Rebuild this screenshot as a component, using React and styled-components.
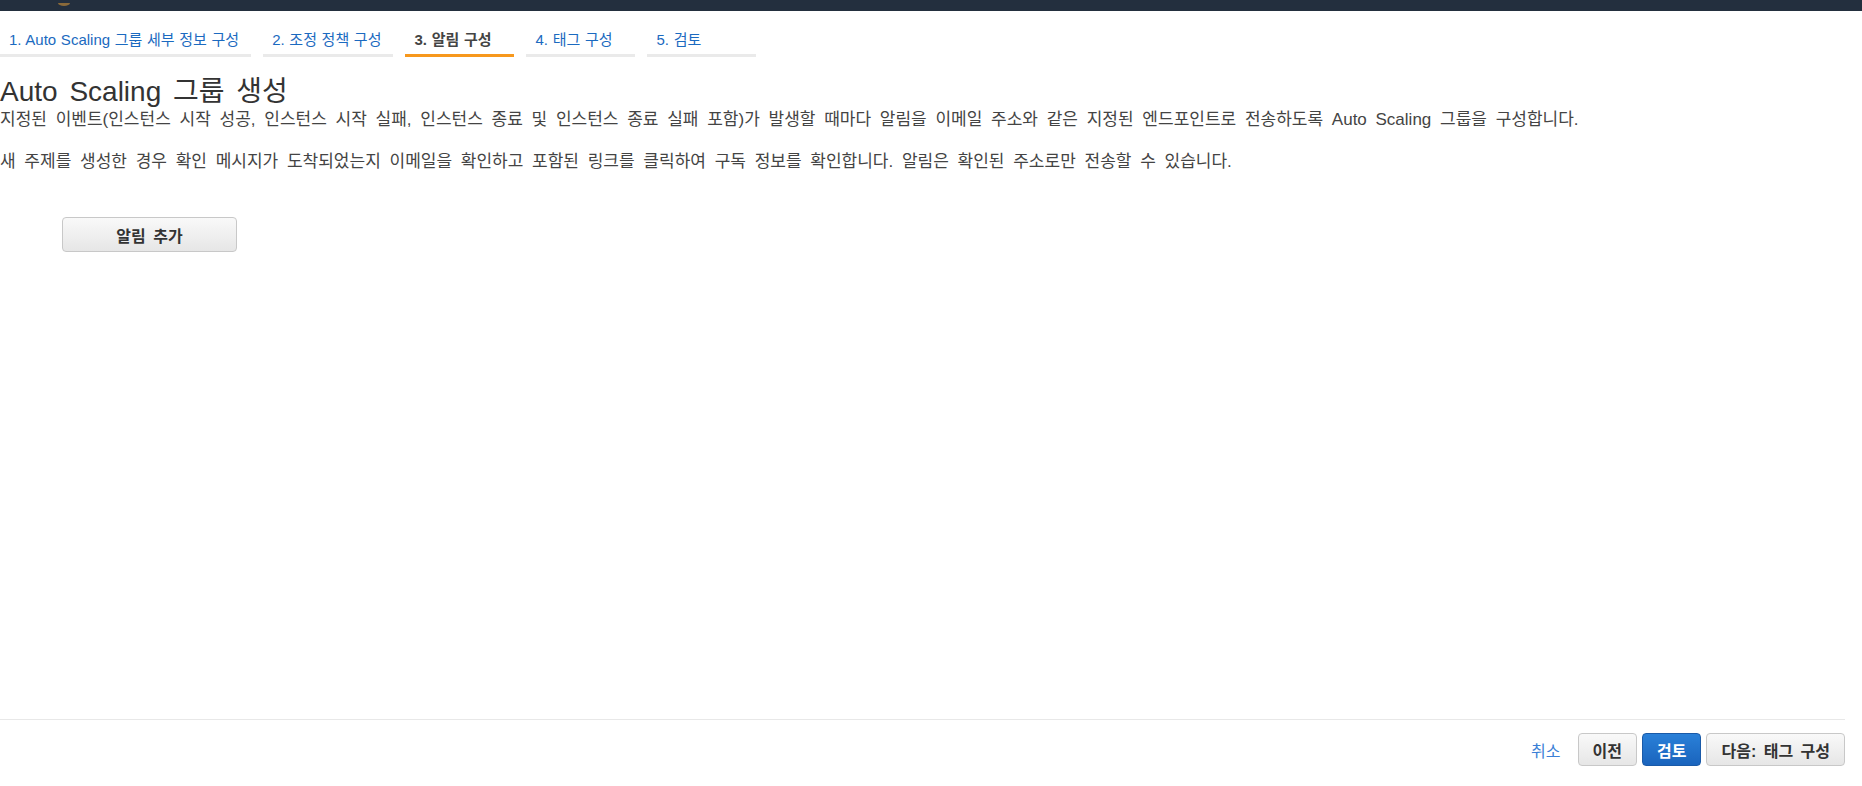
import React from 'react'
import styled, { createGlobalStyle } from 'styled-components'

const GlobalStyle = createGlobalStyle`
  html, body {
    margin: 0;
    padding: 0;
    background: #fff;
  }
  body {
    font-family: "Liberation Sans", "Noto Sans CJK KR", sans-serif;
    color: #444;
  }
`

const Page = styled.div`
  min-height: 100vh;
  display: flex;
  flex-direction: column;
`

const TopBar = styled.div`
  height: 11px;
  background: #232f3e;
  overflow: hidden;
  padding-left: 56px;
`

const Steps = styled.div`
  display: flex;
  gap: 12px;
  margin-top: 20px;
`

const Step = styled.div`
  min-width: 88px;
  padding: 0 12px 5px 9px;
  font-size: 15px;
  line-height: 18px;
  word-spacing: 0.5px;
  color: ${p => (p.$active ? '#444' : '#1b6ac0')};
  font-weight: ${p => (p.$active ? 'bold' : 'normal')};
  border-bottom: 3px solid ${p => (p.$active ? '#f7981d' : '#eaeaea')};
  white-space: nowrap;
`

const Content = styled.div`
  flex: 1;
`

const Title = styled.h1`
  margin: 19px 0 0;
  font-size: 28px;
  line-height: 32px;
  font-weight: normal;
  word-spacing: 4px;
  color: #333;
`

const Text = styled.p`
  margin: 0 0 18px;
  font-size: 17px;
  line-height: 24px;
  word-spacing: 4px;
  color: #444;
  white-space: nowrap;
`

const Actions = styled.div`
  padding: 25px 0 0 62px;
`

const Button = styled.button`
  height: ${p => (p.$tall ? '35px' : '33px')};
  padding: 0 14px;
  border-radius: 4px;
  font-family: inherit;
  font-size: 16px;
  font-weight: bold;
  word-spacing: 3px;
  color: ${p => (p.$primary ? '#fff' : '#333')};
  border: 1px solid ${p => (p.$primary ? '#1a5aa8' : '#c8c8c8')};
  background: ${p =>
    p.$primary
      ? 'linear-gradient(to bottom, #2a80d8, #1a64bd)'
      : 'linear-gradient(to bottom, #f9f9f9, #e6e6e6)'};
  cursor: pointer;
`

const AddButton = styled(Button)`
  width: 175px;
`

const Footer = styled.div`
  margin-right: 17px;
  border-top: 1px solid #e8e8e8;
  padding: 13px 0 20px;
  display: flex;
  justify-content: flex-end;
  align-items: center;
  gap: 5px;
`

const CancelLink = styled.a`
  color: #3b7fd6;
  font-size: 16px;
  margin-right: 12px;
  text-decoration: none;
  cursor: pointer;
`

const Logo = () => (
  <svg width="16" height="11" viewBox="0 0 16 11">
    <ellipse cx="8" cy="0" rx="6" ry="3" fill="#8a6a3a" />
  </svg>
)

const steps = [
  '1. Auto Scaling 그룹 세부 정보 구성',
  '2. 조정 정책 구성',
  '3. 알림 구성',
  '4. 태그 구성',
  '5. 검토'
]

const App = () => (
  <Page>
    <GlobalStyle />
    <TopBar>
      <Logo />
    </TopBar>
    <Steps>
      {steps.map((s, i) => (
        <Step key={s} $active={i === 2}>{s}</Step>
      ))}
    </Steps>
    <Content>
      <Title>Auto Scaling 그룹 생성</Title>
      <Text>
        지정된 이벤트(인스턴스 시작 성공, 인스턴스 시작 실패, 인스턴스 종료 및 인스턴스 종료 실패 포함)가 발생할 때마다 알림을 이메일 주소와 같은 지정된 엔드포인트로 전송하도록 Auto Scaling 그룹을 구성합니다.
      </Text>
      <Text>
        새 주제를 생성한 경우 확인 메시지가 도착되었는지 이메일을 확인하고 포함된 링크를 클릭하여 구독 정보를 확인합니다. 알림은 확인된 주소로만 전송할 수 있습니다.
      </Text>
      <Actions>
        <AddButton $tall>알림 추가</AddButton>
      </Actions>
    </Content>
    <Footer>
      <CancelLink>취소</CancelLink>
      <Button>이전</Button>
      <Button $primary>검토</Button>
      <Button>다음: 태그 구성</Button>
    </Footer>
  </Page>
)

export default App
